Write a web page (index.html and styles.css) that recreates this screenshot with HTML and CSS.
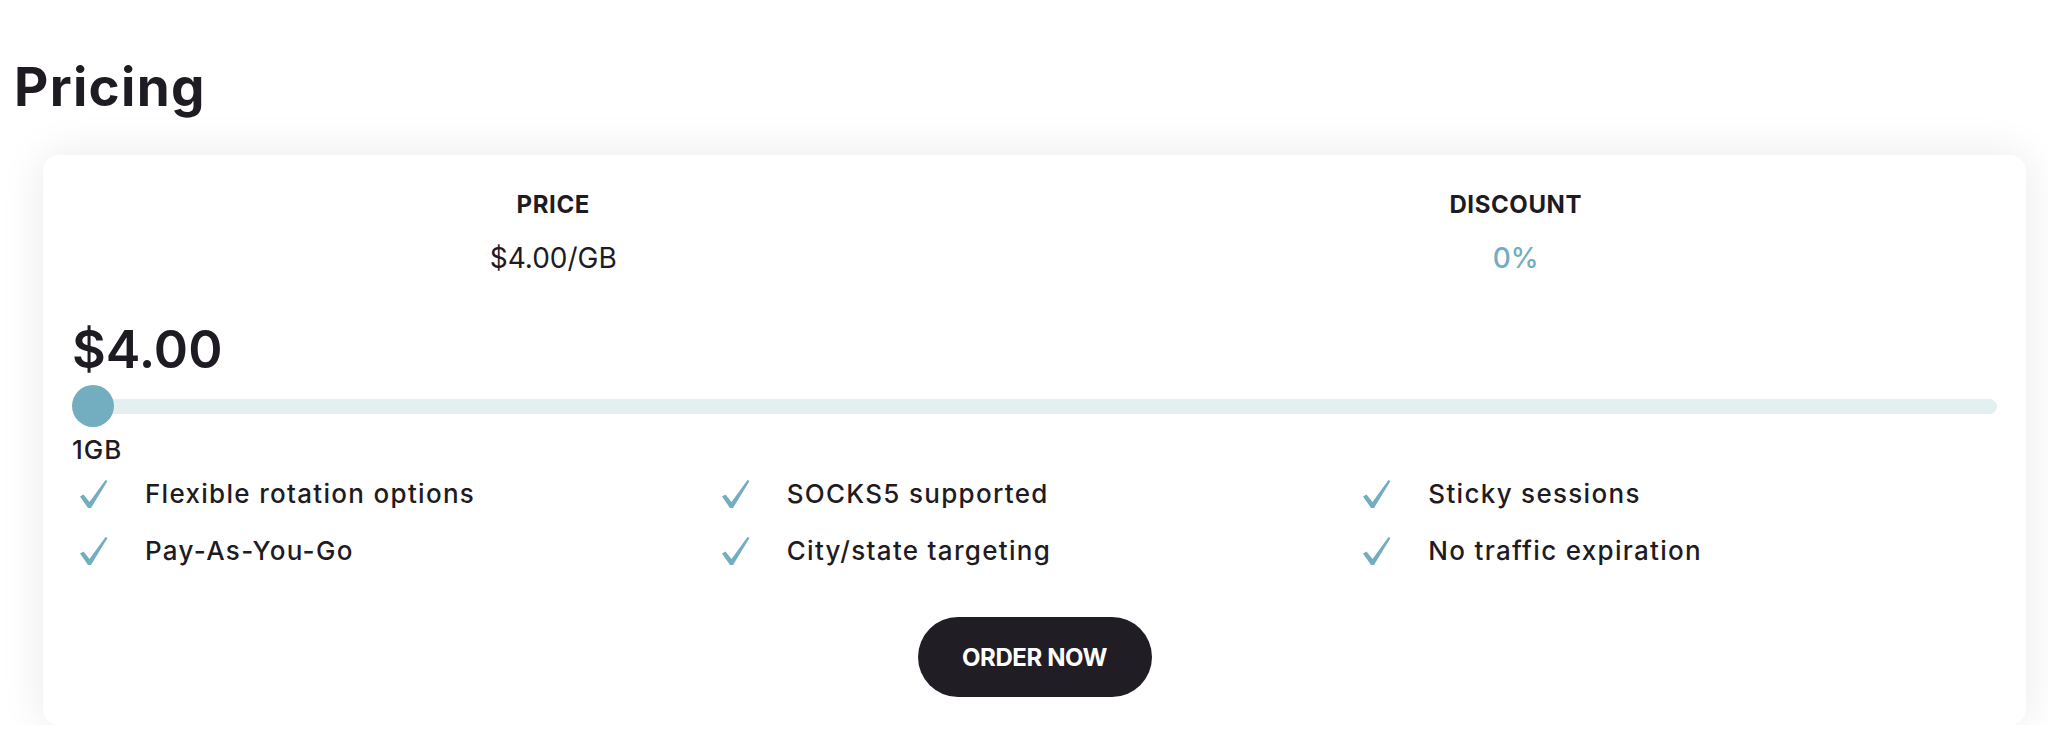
FILE: index.html
```html
<!DOCTYPE html>
<html lang="en">

<head>
    <meta charset="UTF-8">
    <meta name="viewport" content="width=device-width, initial-scale=1.0">
    <title>Pricing</title>
    <link rel="stylesheet" href="styles.css">
</head>

<body>
    <div class="pricing">
        <h1 class="pricing-title">Pricing</h1>

        <div class="pricing-card">
            <div class="stats">
                <div class="stat">
                    <div class="stat-label">PRICE</div>
                    <div class="stat-value">$4.00/GB</div>
                </div>
                <div class="stat">
                    <div class="stat-label">DISCOUNT</div>
                    <div class="stat-value accent">0%</div>
                </div>
            </div>

            <div class="total">$4.00</div>

            <div class="slider">
                <div class="slider-track"></div>
                <div class="slider-thumb"></div>
            </div>
            <div class="slider-value">1GB</div>

            <ul class="features">
                <li>
                    <svg class="check" viewBox="0 0 30 30"><path d="M1 17.5 L4.5 15.5 L10.5 23 L26.5 1 L28.5 2 L12 29 L9 29 Z" /></svg>
                    <span>Flexible rotation options</span>
                </li>
                <li>
                    <svg class="check" viewBox="0 0 30 30"><path d="M1 17.5 L4.5 15.5 L10.5 23 L26.5 1 L28.5 2 L12 29 L9 29 Z" /></svg>
                    <span>SOCKS5 supported</span>
                </li>
                <li>
                    <svg class="check" viewBox="0 0 30 30"><path d="M1 17.5 L4.5 15.5 L10.5 23 L26.5 1 L28.5 2 L12 29 L9 29 Z" /></svg>
                    <span>Sticky sessions</span>
                </li>
                <li>
                    <svg class="check" viewBox="0 0 30 30"><path d="M1 17.5 L4.5 15.5 L10.5 23 L26.5 1 L28.5 2 L12 29 L9 29 Z" /></svg>
                    <span>Pay-As-You-Go</span>
                </li>
                <li>
                    <svg class="check" viewBox="0 0 30 30"><path d="M1 17.5 L4.5 15.5 L10.5 23 L26.5 1 L28.5 2 L12 29 L9 29 Z" /></svg>
                    <span>City/state targeting</span>
                </li>
                <li>
                    <svg class="check" viewBox="0 0 30 30"><path d="M1 17.5 L4.5 15.5 L10.5 23 L26.5 1 L28.5 2 L12 29 L9 29 Z" /></svg>
                    <span>No traffic expiration</span>
                </li>
            </ul>

            <div class="order">
                <button class="order-btn">ORDER NOW</button>
            </div>
        </div>
    </div>
</body>

</html>
```

FILE: styles.css
```css
body {
    margin: 0;
    background: #ffffff;
    color: #1f1b23;
    font-family: "Inter", "Roboto", sans-serif;
}

.pricing {
    padding: 55px 22px 0 14px;
}

.pricing-title {
    margin: 0;
    font-size: 53px;
    line-height: 64px;
    font-weight: 700;
    letter-spacing: 1.3px;
}

.pricing-card {
    margin: 36px 0 0 29px;
    padding: 36px 29px 28px 29px;
    background: #ffffff;
    border-radius: 16px;
    box-shadow: 0 0 45px rgba(0, 0, 0, 0.09);
}

.stats {
    display: grid;
    grid-template-columns: 1fr 1fr;
}

.stat {
    text-align: center;
}

.stat-label {
    font-size: 24px;
    line-height: 28px;
    font-weight: 700;
    letter-spacing: 0.6px;
}

.stat-value {
    margin-top: 22px;
    font-size: 28px;
    line-height: 34px;
    font-weight: 400;
}

.stat-value.accent {
    color: #73adc0;
    font-weight: 500;
}

.total {
    margin-top: 45px;
    font-size: 52px;
    line-height: 60px;
    font-weight: 600;
}

.slider {
    position: relative;
    margin-top: 5px;
    height: 42px;
    display: flex;
    align-items: center;
}

.slider-track {
    flex: 1;
    height: 15px;
    border-radius: 8px;
    background: #e4f0f0;
}

.slider-thumb {
    position: absolute;
    left: 0;
    top: 0;
    width: 42px;
    height: 42px;
    border-radius: 50%;
    background: #73adc0;
}

.slider-value {
    margin-top: 8px;
    font-size: 26px;
    line-height: 30px;
    font-weight: 500;
    letter-spacing: 1px;
}

.features {
    list-style: none;
    margin: 14px 0 0 0;
    padding: 0;
    display: grid;
    grid-template-columns: 1fr 1fr 1fr;
    row-gap: 27px;
}

.features li {
    display: flex;
    align-items: center;
    font-size: 26px;
    line-height: 30px;
    font-weight: 500;
    letter-spacing: 1.3px;
}

.check {
    width: 30px;
    height: 30px;
    margin-left: 7px;
    margin-right: 36px;
    fill: #73adc0;
}

.order {
    margin-top: 51px;
    display: flex;
    justify-content: center;
}

.order-btn {
    width: 234px;
    height: 80px;
    border: none;
    border-radius: 40px;
    background: #211d24;
    color: #ffffff;
    font-family: inherit;
    font-size: 24px;
    font-weight: 700;
    letter-spacing: -0.4px;
    cursor: pointer;
}
```
